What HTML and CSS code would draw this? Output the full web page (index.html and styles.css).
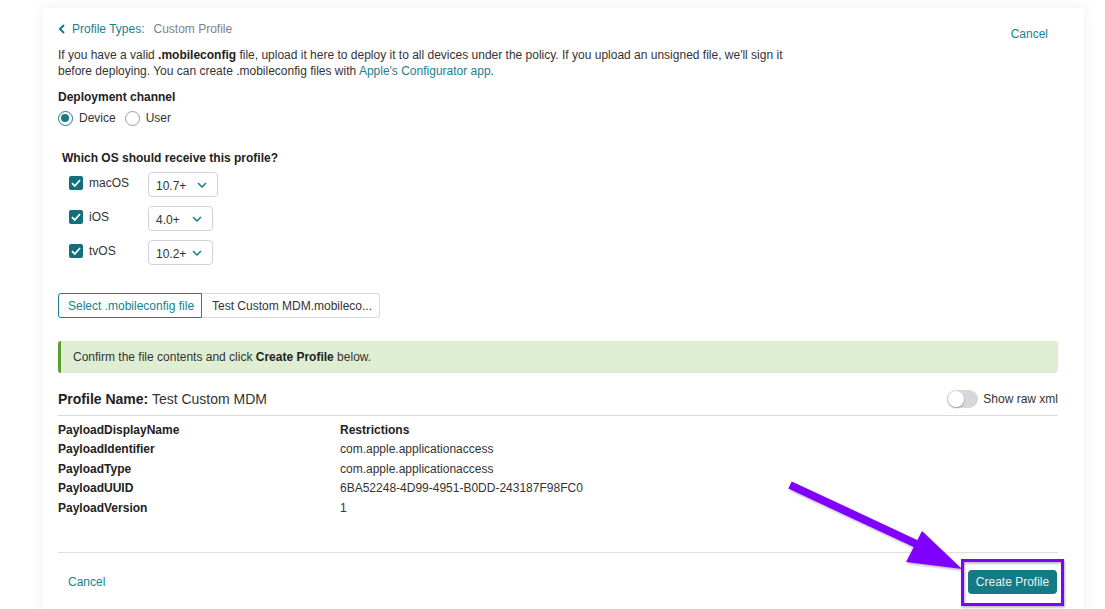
FILE: index.html
```html
<!DOCTYPE html>
<html>
<head>
<meta charset="utf-8">
<link rel="stylesheet" href="styles.css">
</head>
<body>
<div class="card">
  <div class="header">
    <div class="crumb">
      <svg class="chev" width="8" height="10" viewBox="0 0 8 10"><path d="M6 1 L2 5 L6 9" fill="none" stroke="#1a7a86" stroke-width="2"/></svg>
      <span class="crumb-link">Profile Types:</span>
      <span class="crumb-cur">Custom Profile</span>
    </div>
    <a class="link top-cancel">Cancel</a>
  </div>

  <p class="intro">If you have a valid <b>.mobileconfig</b> file, upload it here to deploy it to all devices under the policy. If you upload an unsigned file, we'll sign it before deploying. You can create .mobileconfig files with <a class="link">Apple's Configurator app</a>.</p>

  <div class="label-strong">Deployment channel</div>
  <div class="radios">
    <span class="radio on"></span><span class="rlabel">Device</span>
    <span class="radio"></span><span class="rlabel">User</span>
  </div>

  <div class="os-title">Which OS should receive this profile?</div>
  <div class="os-list">
    <div class="os-row">
      <span class="cb"><svg width="14" height="14" viewBox="0 0 14 14"><path d="M3 7.2 L5.8 10 L11 4" fill="none" stroke="#fff" stroke-width="1.8"/></svg></span>
      <span class="os-name">macOS</span>
      <div class="sel w70"><span>10.7+</span><svg width="10" height="6" viewBox="0 0 10 6"><path d="M1 1 L5 5 L9 1" fill="none" stroke="#1a7a86" stroke-width="1.5"/></svg></div>
    </div>
    <div class="os-row">
      <span class="cb"><svg width="14" height="14" viewBox="0 0 14 14"><path d="M3 7.2 L5.8 10 L11 4" fill="none" stroke="#fff" stroke-width="1.8"/></svg></span>
      <span class="os-name">iOS</span>
      <div class="sel w65"><span>4.0+</span><svg width="10" height="6" viewBox="0 0 10 6"><path d="M1 1 L5 5 L9 1" fill="none" stroke="#1a7a86" stroke-width="1.5"/></svg></div>
    </div>
    <div class="os-row">
      <span class="cb"><svg width="14" height="14" viewBox="0 0 14 14"><path d="M3 7.2 L5.8 10 L11 4" fill="none" stroke="#fff" stroke-width="1.8"/></svg></span>
      <span class="os-name">tvOS</span>
      <div class="sel w65"><span>10.2+</span><svg width="10" height="6" viewBox="0 0 10 6"><path d="M1 1 L5 5 L9 1" fill="none" stroke="#1a7a86" stroke-width="1.5"/></svg></div>
    </div>
  </div>

  <div class="filegroup">
    <span class="fbtn">Select .mobileconfig file</span>
    <span class="fname">Test Custom MDM.mobileco...</span>
  </div>

  <div class="alert"><span>Confirm the file contents and click <b>Create Profile</b> below.</span></div>

  <div class="pname-row">
    <div class="pname"><b>Profile Name:</b> Test Custom MDM</div>
    <div class="raw"><span class="toggle"><span class="knob"></span></span><span>Show raw xml</span></div>
  </div>

  <div class="table">
    <div class="k">PayloadDisplayName</div><div class="v strong">Restrictions</div>
    <div class="k">PayloadIdentifier</div><div class="v">com.apple.applicationaccess</div>
    <div class="k">PayloadType</div><div class="v">com.apple.applicationaccess</div>
    <div class="k">PayloadUUID</div><div class="v">6BA52248-4D99-4951-B0DD-243187F98FC0</div>
    <div class="k">PayloadVersion</div><div class="v">1</div>
  </div>

  <div class="footer">
    <a class="link foot-cancel">Cancel</a>
    <span class="create">Create Profile</span>
  </div>
</div>

<svg class="annot" width="1105" height="609" viewBox="0 0 1105 609">
  <defs>
    <filter id="sh" x="-10%" y="-10%" width="130%" height="130%"><feDropShadow dx="1" dy="1.5" stdDeviation="1.2" flood-color="#000" flood-opacity="0.3"/></filter>
  </defs>
  <g filter="url(#sh)">
    <path d="M790 485 L925 548" stroke="#8000ff" stroke-width="8" fill="none"/>
    <polygon points="922,531 906,562 962,569" fill="#8000ff"/>
    <rect x="962.5" y="560.5" width="100" height="44" fill="none" stroke="#8000ff" stroke-width="3"/>
  </g>
</svg>
</body>
</html>
```

FILE: styles.css
```css
* { box-sizing: border-box; }
html, body { margin: 0; padding: 0; }
body {
  background: #ffffff;
  font-family: "Liberation Sans", Arial, sans-serif;
  font-size: 12px;
  color: #333;
  width: 1105px;
  height: 609px;
  overflow: hidden;
  position: relative;
  padding-top: 8px;
  padding-left: 43px;
}
.card {
  width: 1041px;
  height: 620px;
  background: #fff;
  box-shadow: 0 0 14px rgba(0,0,0,0.07);
  padding: 13px 26px 0 15px;
}
.link { color: #1a7f8e; text-decoration: none; }
.header { display: flex; justify-content: space-between; align-items: flex-start; line-height: 16px; }
.crumb { display: flex; align-items: center; }
.chev { margin-right: 6px; }
.crumb-link { color: #1a7f8e; margin-right: 9px; }
.crumb-cur { color: #7d8288; }
.top-cancel { margin-top: 5px; margin-right: 10px; }
.intro { margin: 5px 0 0; line-height: 16px; width: 750px; }
.intro b { font-weight: 700; color: #222; }
.label-strong { margin-top: 10px; font-weight: 700; line-height: 16px; color: #222; }
.radios { display: flex; align-items: center; margin-top: 5px; height: 16px; }
.radio { width: 15px; height: 15px; border-radius: 50%; border: 1px solid #9a9ea3; display: inline-block; }
.radio.on { border: 1.5px solid #1a7a86; position: relative; }
.radio.on::after { content: ""; position: absolute; left: 2px; top: 2px; width: 8px; height: 8px; border-radius: 50%; background: #1a7a86; }
.rlabel { margin-left: 6px; margin-right: 9px; }
.os-title { margin-top: 24px; margin-left: 4px; font-weight: 700; line-height: 16px; color: #222; }
.os-list { margin-top: 6px; margin-left: 11px; display: flex; flex-direction: column; gap: 9px; }
.os-row { display: flex; align-items: center; height: 25px; }
.cb { width: 14px; height: 14px; border-radius: 2px; background: #136f7b; display: inline-flex; margin-top: -4px; }
.os-name { margin-left: 6px; width: 59px; margin-top: -4px; }
.sel { height: 25px; border: 1px solid #cfd2d6; border-radius: 4px; display: flex; align-items: center; justify-content: space-between; padding: 0 10px 0 7px; }
.sel span { padding-top: 2px; }
.w70 { width: 70px; }
.w65 { width: 65px; }
.filegroup { margin-top: 28px; display: flex; height: 25px; white-space: nowrap; }
.fbtn { display: flex; align-items: center; padding: 0 9px; border: 1px solid #1a7f8e; border-radius: 3px 0 0 3px; color: #1a7f8e; width: 144px; }
.fname { display: flex; align-items: center; padding: 0 10px; border: 1px solid #d8dadd; border-left: none; border-radius: 0 3px 3px 0; color: #333; width: 178px; }
.alert { margin-top: 23px; height: 32px; background: #dfeed3; border-left: 3px solid #5a9e30; border-radius: 3px; display: flex; align-items: center; padding-left: 12px; }
.alert b { font-weight: 700; color: #222; }
.pname-row { margin-top: 17px; height: 18px; display: flex; justify-content: space-between; align-items: center; }
.pname { font-size: 14px; color: #333; }
.pname b { font-weight: 700; color: #222; }
.raw { display: flex; align-items: center; gap: 5px; color: #333; }
.toggle { width: 31px; height: 18px; border-radius: 9px; background: #d6d7db; position: relative; display: inline-block; }
.knob { position: absolute; left: 1px; top: 1px; width: 16px; height: 16px; border-radius: 50%; background: #fff; box-shadow: 0 1px 2px rgba(0,0,0,0.3); }
.table { margin-top: 7px; border-top: 1px solid #d9d9d9; padding-top: 4px; display: grid; grid-template-columns: 282px 1fr; grid-auto-rows: 19.5px; align-items: center; padding-bottom: 34px; border-bottom: 1px solid #dedede; }
.k { font-weight: 700; color: #222; }
.v { color: #333; }
.v.strong { font-weight: 700; color: #222; }
.footer { display: flex; justify-content: space-between; align-items: center; padding-top: 17px; padding-left: 10px; }
.create { background: #137a86; color: #e8f3f4; height: 24px; width: 89px; border-radius: 4px; display: flex; align-items: center; justify-content: center; margin-right: 1px; }
.annot { position: absolute; left: 0; top: 0; pointer-events: none; }
```
